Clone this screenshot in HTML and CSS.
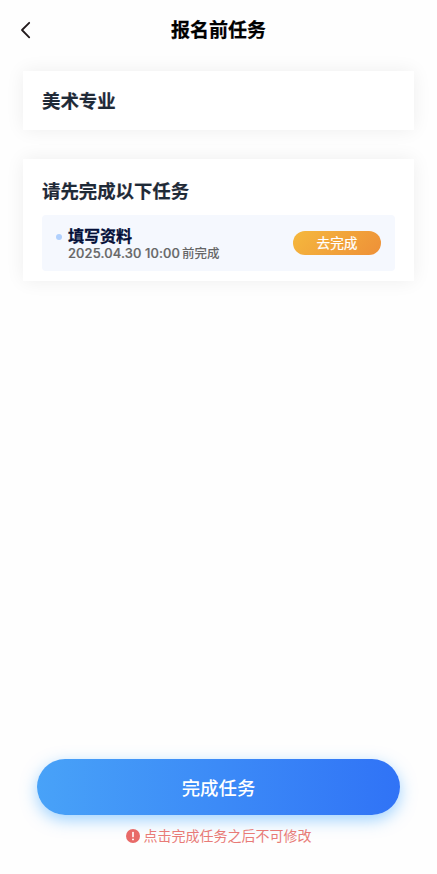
FILE: index.html
```html
<!DOCTYPE html>
<html lang="zh-CN">
<head>
<meta charset="utf-8">
<title>报名前任务</title>
<link rel="stylesheet" href="styles.css">
</head>
<body>
<header class="nav">
<svg class="back" width="12" height="18" viewBox="0 0 12 18"><path d="M9.200 1.800 2 9l7.200 7.400" fill="none" stroke="#21191b" stroke-width="1.8" stroke-linecap="round" stroke-linejoin="round"/></svg>
<h1>报名前任务</h1>
</header>
<main>
<section class="card major"><h2>美术专业</h2></section>
<section class="card tasks">
<h2>请先完成以下任务</h2>
<div class="task">
<span class="dot"></span>
<div class="info"><h3>填写资料</h3><p>2025.04.30 10:00<span class="due">前完成</span></p></div>
<button class="go">去完成</button>
</div>
</section>
</main>
<footer>
<button class="finish">完成任务</button>
<p class="note"><svg width="14" height="14" viewBox="0 0 14 14"><circle cx="7" cy="7" r="7" fill="#e86a68"/><path d="M7 3.600v4" stroke="#fff" stroke-width="1.600" stroke-linecap="round"/><circle cx="7" cy="10.400" r=".95" fill="#fff"/></svg><span>点击完成任务之后不可修改</span></p>
</footer>
</body>
</html>
```
FILE: styles.css
```css
* { box-sizing: border-box; margin: 0; padding: 0; }
body { height: 874px; display: flex; flex-direction: column; background: #fefefe; font-family: "Noto Sans CJK SC", sans-serif; overflow: hidden; }
button { border: 0; font-family: inherit; color: #fff; display: block; }
.nav { height: 60px; display: grid; grid-template-columns: 50px 1fr 50px; align-items: center; }
.back { margin-left: 20px; }
h1 { font-size: 19px; line-height: 28px; font-weight: 700; text-align: center; color: #000; padding-bottom: 2px; -webkit-text-stroke: .25px; }
main { flex: 1; padding: 11px 23px 0; }
.card { background: #fff; box-shadow: 0 0 18px rgba(0,0,0,.065); padding: 0 19px; }
h2 { font-size: 18.400px; line-height: 28px; font-weight: 700; color: #1f2a37; -webkit-text-stroke: .2px; }
.major { height: 59px; padding-top: 15px; }
.tasks { margin-top: 29px; height: 122px; padding-top: 17px; }
.task { height: 56px; margin-top: 11px; background: #f5f8fe; border-radius: 4px; display: flex; align-items: center; padding: 0 14px; }
.dot { width: 6px; height: 6px; border-radius: 50%; background: #b0d0fd; margin: -12px 6px 0 0; }
.info { flex: 1; padding-bottom: 1px; }
h3 { font-size: 16px; line-height: 20px; color: #040f38; -webkit-text-stroke: .3px; }
.info p { margin-top: 1px; font: 500 13px/15px Inter, "Noto Sans CJK SC", sans-serif; letter-spacing: .11px; color: #666; -webkit-text-stroke: .2px; }
.due { margin-left: 2px; font-size: 12.500px; letter-spacing: 0; -webkit-text-stroke: 0; }
.go { width: 88px; height: 24px; border-radius: 12px; background: linear-gradient(135deg,#f5b83d,#ee9038); font-size: 13.700px; line-height: 23px; padding-bottom: 1px; font-weight: 400; -webkit-text-stroke: .2px; }
footer { height: 115px; padding: 0 37px; }
.finish { width: 100%; height: 56px; padding-bottom: 1px; border-radius: 28px; background: linear-gradient(90deg,#48a2f8,#3073f6); box-shadow: 0 5px 16px rgba(64,168,255,.5); font-size: 18.400px; font-weight: 500; }
.note { margin-top: 11px; display: flex; align-items: center; justify-content: center; gap: 4px; color: #e87b77; font-size: 14px; line-height: 20px; }
.note span { position: relative; top: -1px; }
```
